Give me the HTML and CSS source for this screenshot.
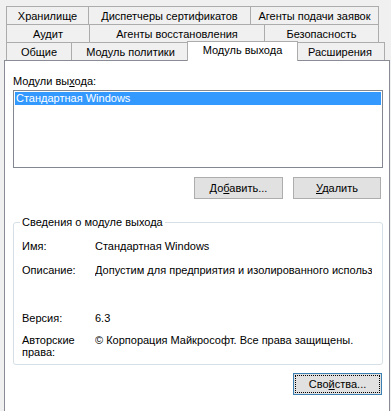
FILE: index.html
```html
<!DOCTYPE html>
<html lang="ru">

<head>
    <meta charset="UTF-8">
    <meta name="viewport" content="width=device-width, initial-scale=1.0">
    <title>Свойства: модуль выхода</title>
    <link rel="stylesheet" href="styles.css">
</head>

<body>
    <div class="tabs">
        <div class="tab-row">
            <div class="tab tab-storage">Хранилище</div>
            <div class="tab tab-managers">Диспетчеры сертификатов</div>
            <div class="tab tab-agents">Агенты подачи заявок</div>
        </div>
        <div class="tab-row">
            <div class="tab tab-audit">Аудит</div>
            <div class="tab tab-recovery">Агенты восстановления</div>
            <div class="tab tab-security">Безопасность</div>
        </div>
        <div class="tab-row">
            <div class="tab tab-general">Общие</div>
            <div class="tab tab-policy">Модуль политики</div>
            <div class="tab tab-exit active">Модуль выхода</div>
            <div class="tab tab-ext">Расширения</div>
        </div>
    </div>

    <div class="panel">
        <div class="caption">Модули вы<u>х</u>ода:</div>
        <div class="list">
            <div class="list-item selected">Стандартная Windows</div>
        </div>

        <div class="actions">
            <button class="btn btn-add" type="button">До<u>б</u>авить...</button>
            <button class="btn btn-remove" type="button"><u>У</u>далить</button>
        </div>

        <fieldset class="details">
            <legend>Сведения о модуле выхода</legend>
            <div class="info">
                <div class="info-label">Имя:</div>
                <div class="info-value">Стандартная Windows</div>

                <div class="info-label">Описание:</div>
                <div class="info-value">Допустим для предприятия и изолированного использования</div>

                <div class="info-label">Версия:</div>
                <div class="info-value">6.3</div>

                <div class="info-label copyright">Авторские<br>права:</div>
                <div class="info-value copyright">© Корпорация Майкрософт. Все права защищены.</div>
            </div>
        </fieldset>

        <div class="footer">
            <button class="btn btn-props" type="button"><span class="focus">Сво<u>й</u>ства...</span></button>
        </div>
    </div>
</body>

</html>
```

FILE: styles.css
```css
body {
    margin: 0;
    width: 391px;
    height: 411px;
    overflow: hidden;
    background-color: #f0f0f0;
    font-family: "Liberation Sans", Arial, sans-serif;
    font-size: 11px;
    color: #000000;
}

.tabs {
    padding-top: 6px;
    margin-left: 6px;
}

.tab-row {
    display: flex;
    align-items: flex-start;
}

.tab {
    box-sizing: border-box;
    height: 18px;
    padding-top: 2px;
    line-height: 15px;
    text-align: center;
    white-space: nowrap;
    background-color: #f0f0f0;
    border: 1px solid #acacac;
    border-bottom: none;
    margin-left: -1px;
}

.tab:first-child {
    margin-left: 0;
}

.tab-storage { width: 83px; }
.tab-managers { width: 163px; }
.tab-agents { width: 129px; }

.tab-audit { width: 84px; }
.tab-recovery { width: 176px; }
.tab-security { width: 115px; }

.tab-general { width: 66px; }
.tab-policy { width: 119px; }
.tab-exit { width: 111px; }
.tab-ext { width: 90px; margin-left: -3px; }

.tab.active {
    position: relative;
    z-index: 1;
    height: 20px;
    margin: -1px 0 -1px -3px;
    padding-top: 1px;
    background-color: #ffffff;
}

.panel {
    box-sizing: border-box;
    width: 386px;
    height: 360px;
    margin-left: 4px;
    padding: 14px 0 0 8px;
    background-color: #ffffff;
    border: 1px solid #898c95;
}

.caption {
    line-height: 13px;
}

.list {
    box-sizing: border-box;
    width: 370px;
    height: 78px;
    margin-top: 2px;
    padding: 1px;
    border: 1px solid #828790;
}

.list-item {
    height: 13px;
    line-height: 13px;
    padding-left: 1px;
}

.list-item.selected {
    background-color: #3399ff;
    color: #ffffff;
}

.actions {
    display: flex;
    justify-content: flex-end;
    gap: 10px;
    width: 370px;
    margin-top: 9px;
    padding-right: 2px;
    box-sizing: border-box;
}

.btn {
    box-sizing: border-box;
    height: 22px;
    padding: 1px 0 0;
    font-family: inherit;
    font-size: 11px;
    line-height: 19px;
    color: #000000;
    background-color: #e1e1e1;
    border: 1px solid #adadad;
    border-radius: 0;
}

.btn-add { width: 89px; }
.btn-remove { width: 88px; }

.details {
    box-sizing: border-box;
    width: 370px;
    height: 149px;
    min-width: 0;
    margin: 17px 0 0;
    padding: 11px 6px 0;
    border: 1px solid #d5dfe5;
    border-radius: 3px;
}

.details legend {
    padding: 0 2px;
    line-height: 13px;
}

.info {
    display: grid;
    grid-template-columns: 73px 277px;
    grid-template-rows: 24px 48px 22px auto;
    padding-left: 2px;
    line-height: 13px;
}

.info-value {
    white-space: nowrap;
    overflow: hidden;
}

.copyright {
    line-height: 12px;
}

.footer {
    display: flex;
    justify-content: flex-end;
    width: 370px;
    margin-top: 8px;
    padding-right: 1px;
    box-sizing: border-box;
}

.btn-props {
    width: 89px;
    padding: 1px;
    border-color: #3c7fb1;
}

.btn-props .focus {
    display: block;
    box-sizing: border-box;
    height: 18px;
    padding-top: 1px;
    line-height: 15px;
    border: 1px dotted #000000;
}
```
